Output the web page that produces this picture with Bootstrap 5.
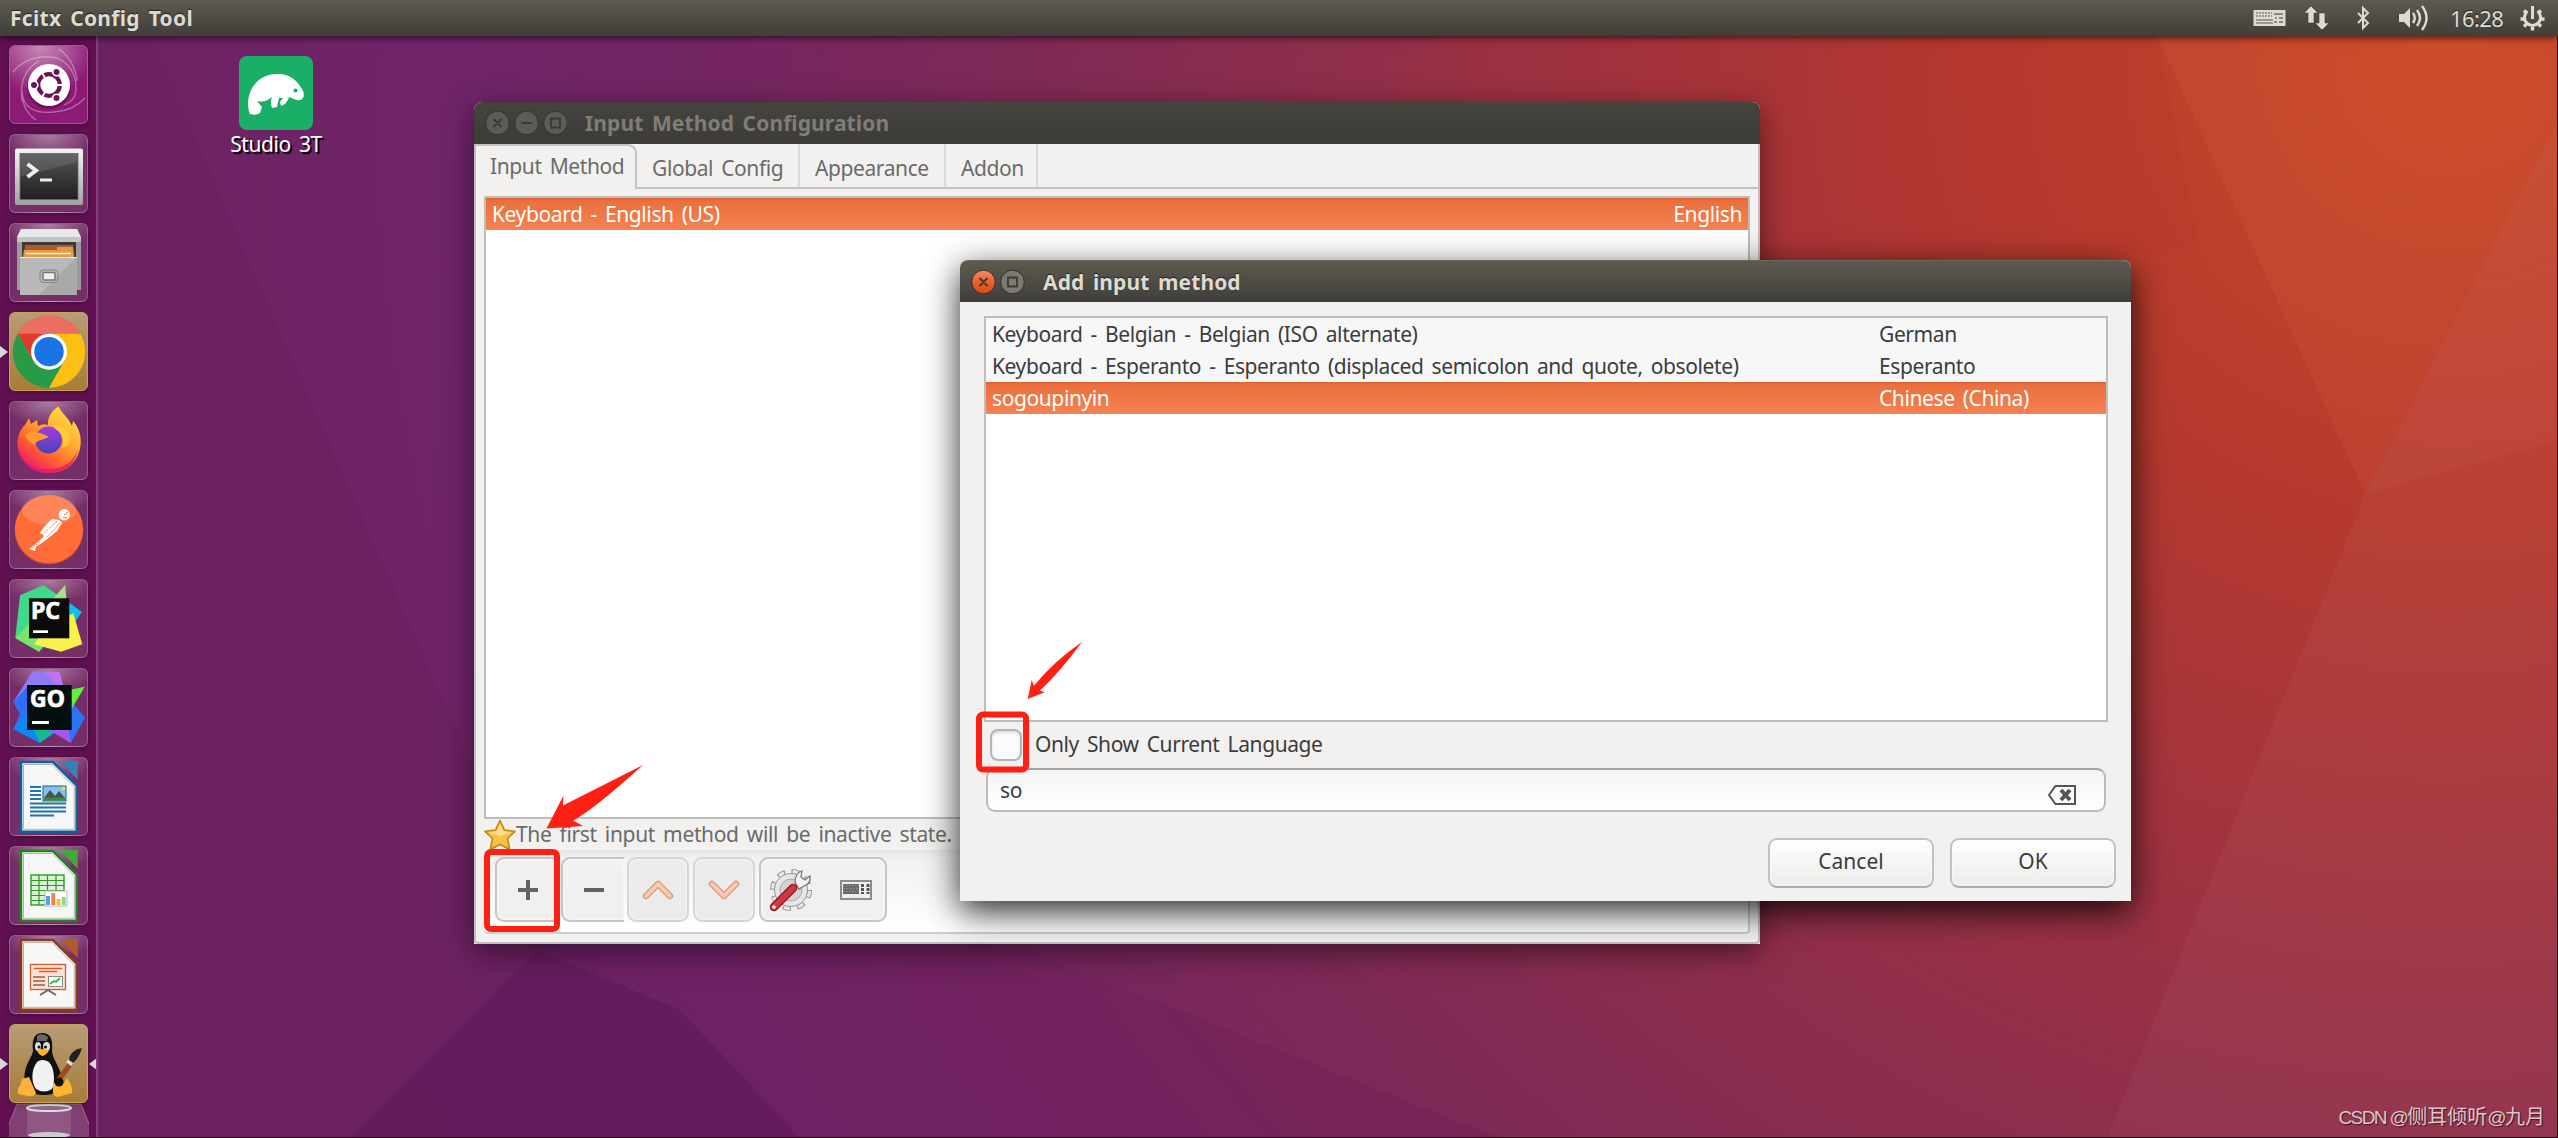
<!DOCTYPE html>
<html lang="en">
<head>
    <meta charset="UTF-8">
    <meta name="viewport" content="width=device-width, initial-scale=1.0">
    <title>Fcitx Config Tool</title>
    <link href="https://cdn.jsdelivr.net/npm/bootstrap@5.3.0/dist/css/bootstrap.min.css" rel="stylesheet">
    <style>
        body {
            width: 2558px;
            height: 1138px;
            overflow: hidden;
            background: #6d2363;
            font-family: "Noto Sans", "Open Sans", sans-serif;
            font-size: 21px;
            line-height: 32px;
            letter-spacing: -0.4px;
            word-spacing: 3px;
            color: #3c3c3c;
        }
        svg { display: block; flex: none; }
        .wallpaper { position: absolute; inset: 0; z-index: -1; }

        /* top panel */
        .top-panel {
            height: 36px;
            padding: 0 13px 0 10px;
            background: linear-gradient(#5d5a50, #3f3e39);
            color: #dfdbd2;
            text-shadow: 0 -1px 1px #222;
            box-shadow: 0 1px 8px rgba(0, 0, 0, .75);
            position: relative;
            z-index: 5;
        }
        .panel-title { font-weight: 700; letter-spacing: .3px; }
        .panel-clock { font-size: 22px; width: 55px; margin-left: 20px; margin-right: 15px; letter-spacing: -0.6px; }
        .panel-net { margin-left: 15px; margin-right: -3px; }

        /* launcher */
        .launcher {
            width: 98px;
            height: 1102px;
            padding-top: 9px;
            padding-left: 9px;
            background: #621052;
            border-right: 2px solid #84427b;
            overflow: hidden;
        }
        .tile {
            width: 79px;
            height: 79px;
            margin-bottom: 10px;
            flex: none;
            position: relative;
            border-radius: 6px;
            border: 1px solid rgba(255, 255, 255, .22);
            background: radial-gradient(ellipse 45px 24px at 50% 0, rgba(255, 255, 255, .38), rgba(255, 255, 255, 0)), rgba(255, 255, 255, .13);
            box-shadow: 0 1px 5px rgba(0, 0, 0, .35);
        }
        .tile svg { margin: -1px; width: 79px; height: 79px; }
        .tile text { font-family: "Noto Sans", sans-serif; font-weight: 700; font-size: 23px; letter-spacing: 0; fill: #fff; stroke: #fff; stroke-width: .7px; }
        .tile-dash { background: radial-gradient(ellipse 55px 50px at 40% 0, #c88ab9, #8d1a75); border-color: #b650a0; }
        .tile-active { background: linear-gradient(#b79c74, #a87d3a); border-color: #c9a259; }
        .pip { position: absolute; top: 33px; border: 6px solid transparent; }
        .pip-left { left: -10px; border-left: 8px solid #d8d8d8; }
        .pip-right { right: -10px; border-right: 8px solid #d8d8d8; }
        .trash { margin-top: -10px; }

        /* desktop shortcut */
        .shortcut { position: absolute; left: 226px; top: 56px; width: 100px; color: #fff; text-shadow: 2px 2px 1px #000; }
        .shortcut svg { margin-bottom: -2px; }

        /* windows */
        .win { position: absolute; border-radius: 8px 8px 0 0; background: #f2f1ef; }
        .win-config { left: 474px; top: 102px; width: 1286px; height: 842px; box-shadow: 0 8px 30px rgba(0, 0, 0, .5); }
        .win-dialog { left: 960px; top: 260px; width: 1171px; height: 641px; box-shadow: 0 10px 34px rgba(0, 0, 0, .85); }
        .win-title { height: 42px; padding-left: 11px; border-radius: 8px 8px 0 0; font-weight: 700; letter-spacing: .1px; }
        .win-title span { margin-left: 18px; }
        .win-config .win-title { background: linear-gradient(#45443f, #3c3b37); color: #807d76; }
        .win-dialog .win-title { background: linear-gradient(#5d5a50, #3f3e39); color: #dfdbd2; text-shadow: 0 -1px 1px #222; border-top: 1px solid #69675a; }

        .win-config .win-main { height: 800px; color: #6b6b6b; border: 2px solid #c0bfbd; border-top: 0; border-radius: 0 0 4px 4px; }
        .tab-row { height: 45px; }
        .tab-item { height: 43px; padding-top: 4px; padding-left: 15px; border-right: 2px solid #dddbd8; display: flex; align-items: center; }
        .tab-current { width: 161px; height: 45px; padding: 0 0 4px 14px; border: 2px solid #c6c4c2; border-bottom: 0; border-left: 0; border-radius: 0 9px 0 0; }
        .tab-rest { border-bottom: 2px solid #c6c4c2; flex: 1; height: 45px; }
        .tab-wide { width: 163px; }
        .tab-mid { width: 146px; }
        .tab-small { width: 92px; }

        .list-box { background: #fff; border: 2px solid #bfbdb9; }
        .config-list { height: 623px; margin: 7px 8px 0; }
        .list-line { height: 32px; padding: 0 6px; }
        .list-line.picked { background: linear-gradient(#e0612f, #eb703d 3px, #f68151); color: #fff; }

        .hint { height: 31px; margin-left: 8px; letter-spacing: -0.35px; }
        .hint span { padding-bottom: 2px; }
        .tool-area { height: 84px; margin: 0 8px; padding: 7px 0 0 11px; background: linear-gradient(#e6e5e3, #f2f1ef 10%, #fff); border-bottom: 2px solid #cfcdca; border-right: 2px solid #cfcdca; border-radius: 0 0 4px 4px; }
        .tool-btn {
            width: 62px;
            height: 65px;
            margin-right: 4px;
            border: 2px solid #c6c4c3;
            border-radius: 9px;
            background: linear-gradient(#f2f1ef, #f0efed);
            box-shadow: inset 0 0 3px #fff;
            display: flex;
            align-items: center;
            justify-content: center;
        }
        .tool-cut { border-right: 0; border-radius: 9px 0 0 9px; width: 63px; margin-right: 3px; }
        .tool-off { background: #ebebeb; border-color: #d6d5d4; }
        .tool-wide { width: 128px; justify-content: space-between; padding: 0 13px 0 8px; }

        /* dialog body */
        .dialog-list { height: 406px; margin: 14px 23px 0 24px; }
        .dialog-list .list-line:not(.picked) { background: #f7f7f7; }
        .col-lang { width: 221px; }
        .check-row { height: 46px; padding-left: 30px; }
        .check-row span { padding-bottom: 2px; }
        .check-box { width: 32px; height: 32px; border: 2px solid #b5b4b3; border-radius: 8px; background: #fcfcfc; box-shadow: inset 0 2px 3px #ddd; margin-right: 13px; }
        .entry { height: 44px; margin: 0 25px 0 26px; padding: 0 28px 0 12px; border: 2px solid #bdbcbb; border-top-color: #a3a2a1; border-radius: 9px; background: linear-gradient(#f4f4f4, #fff); }
        .entry svg { margin-top: 10px; }
        .dialog-btns { padding: 26px 15px 0 0; gap: 16px; }
        .dlg-btn { width: 166px; height: 50px; padding-bottom: 5px; border: 2px solid #c3c2c1; border-bottom-color: #adacab; border-radius: 9px; background: linear-gradient(#fff, #ecebe9); box-shadow: inset 0 0 3px #fff; display: flex; align-items: center; justify-content: center; letter-spacing: 0; }

        .marks { position: absolute; left: 0; top: 0; z-index: 10; }
        .credit { position: absolute; right: 13px; bottom: 4px; font: 20px/32px "Liberation Sans", "Noto Sans CJK SC", sans-serif; letter-spacing: 0; word-spacing: 0; color: #dcc8cc; text-shadow: 1px 1px 1px rgba(0, 0, 0, .6); }
        .credit span { font-size: 19px; letter-spacing: -1.6px; }
        .edge { position: absolute; inset: 0; border-right: 1px solid #111; border-bottom: 1px solid #111; }
    </style>
</head>
<body>
    <!-- Wallpaper -->
    <svg class="wallpaper" width="2558" height="1138" viewBox="0 0 2558 1138">
        <defs>
            <radialGradient id="wall" gradientUnits="userSpaceOnUse" cx="2450" cy="60" r="2300">
                <stop offset="0" stop-color="#ca4826"/>
                <stop offset=".2" stop-color="#b6392e"/>
                <stop offset=".33" stop-color="#a5343c"/>
                <stop offset=".46" stop-color="#922f49"/>
                <stop offset=".6" stop-color="#812a54"/>
                <stop offset=".75" stop-color="#742561"/>
                <stop offset=".87" stop-color="#70246a"/>
                <stop offset="1" stop-color="#6d2363"/>
            </radialGradient>
        </defs>
        <rect width="2558" height="1138" fill="url(#wall)"/>
        <polygon points="0,0 134,0 474,770 538,950 350,1138 0,1138" fill="#6c2262"/>
        <polygon points="538,950 350,1138 800,1138 680,1010" fill="#611a5b" opacity=".7"/>
        <polygon points="538,950 680,1010 800,1138 1500,1138 900,900 474,900" fill="#681b5c" opacity=".2"/>
        <polygon points="1440,36 1370,110 1700,280 2200,250 2157,36" fill="#b0322f" opacity=".1"/>
        <polygon points="2157,36 2365,494 2107,1138 2558,1138 2558,36" fill="#fff" opacity=".035"/>
        <polygon points="2365,494 2558,120 2558,36 2157,36" fill="#d8501f" opacity=".13"/>
        <polygon points="2365,494 2558,440 2558,120" fill="#fff" opacity=".03"/>
    </svg>

    <!-- Top panel -->
    <nav class="top-panel d-flex align-items-center">
        <span class="panel-title">Fcitx Config Tool</span>
        <div class="d-flex align-items-center ms-auto">
            <svg width="33" height="18" viewBox="0 0 33 18">
                <rect x=".5" y="1" width="32" height="16" fill="#dfdbd2"/>
                <path d="M3 4H19M3 7H19" stroke="#99978f" stroke-width="2" stroke-dasharray="2 1"/>
                <path d="M3 11H20M3 14H20" stroke="#99978f" stroke-width="2"/>
                <path d="M21 5H30M22 9H24M26 9H30M21 13H24M26 13H30" stroke="#8a8880" stroke-width="2"/>
            </svg>
            <svg class="panel-net" width="32" height="26" viewBox="0 0 32 26">
                <path d="M10 1L17 8H13V18H7V8H3zM21 25L28 18H24V8H18V18H14z" fill="#dfdbd2" stroke="#3a3935" stroke-width=".6"/>
            </svg>
            <svg class="ms-4" width="18" height="26" viewBox="0 0 18 26">
                <path d="M4 8L14 18L9 23V3L14 8L4 18" fill="none" stroke="#dfdbd2" stroke-width="2"/>
            </svg>
            <svg class="ms-4" width="34" height="28" viewBox="0 0 34 28">
                <path d="M3 10H8L14 4V24L8 18H3z" fill="#dfdbd2"/>
                <path d="M17 9Q20.500 14 17 19M21 6Q27 14 21 22M26 2Q35 14 26 26" fill="none" stroke="#dfdbd2" stroke-width="2.400"/>
            </svg>
            <span class="panel-clock">16:28</span>
            <svg width="25" height="26" viewBox="-12.5 -13 25 26">
                <path d="M-5 -6.800A8 8 0 1 0 5 -6.800" fill="none" stroke="#dfdbd2" stroke-width="3"/>
                <path d="M0 -12V1" stroke="#dfdbd2" stroke-width="3"/>
                <path d="M-8 1H-12M8 1H12M-6 6L-8.500 8.500M6 6L8.500 8.500M0 9V12.500M-6 -5L-8.500 -7.500M6 -5L8.500 -7.500" stroke="#dfdbd2" stroke-width="3.400"/>
            </svg>
        </div>
    </nav>

    <!-- Launcher -->
    <div class="launcher d-flex flex-column">
        <div class="tile tile-dash">
            <svg viewBox="0 0 79 79">
                <path d="M4 27Q20 8 48 13Q68 22 67 46Q66 56 55 60M13 56Q9 28 30 16M13 46Q14 70 45 67Q64 66 76 53M50 4Q66 16 68 36M13 50Q14 66 27 75" fill="none" stroke="#fff" stroke-opacity=".35" stroke-width="1.3"/>
                <circle cx="40" cy="42" r="22" fill="#000" opacity=".25"/>
                <circle cx="40" cy="40" r="21" fill="#fff"/>
                <circle cx="40" cy="40" r="10.800" fill="none" stroke="#6c1458" stroke-width="4.200"/>
                <path d="M40 40L32 26M40 40L32 54M40 40H56" stroke="#fff" stroke-width="1.800"/>
                <circle cx="40" cy="40" r="8.200" fill="#fff"/>
                <g fill="#6c1458" stroke="#fff" stroke-width="1.600"><circle cx="25" cy="40" r="3.800"/><circle cx="47.500" cy="27" r="3.800"/><circle cx="47.500" cy="53" r="3.800"/></g>
            </svg>
        </div>
        <div class="tile">
            <svg viewBox="0 0 79 79">
                <defs>
                    <linearGradient id="frame" x2="0" y2="1"><stop stop-color="#f4f4f4"/><stop offset="1" stop-color="#a2a2a2"/></linearGradient>
                    <linearGradient id="screen" x2="0" y2="1"><stop stop-color="#555"/><stop offset="1" stop-color="#1f1f1f"/></linearGradient>
                </defs>
                <rect x="6" y="14.500" width="68" height="56.500" rx="2" fill="url(#frame)"/>
                <rect x="11" y="19.500" width="58" height="46" fill="url(#screen)" stroke="#666" stroke-width=".8"/>
                <path d="M11.500 20H68.500V28L11.500 43z" fill="#fff" opacity=".1"/>
                <path d="M18.500 30L27 36.500L18.500 43" fill="none" stroke="#eee" stroke-width="4"/>
                <path d="M31 46H43" stroke="#eee" stroke-width="3"/>
            </svg>
        </div>
        <div class="tile">
            <svg viewBox="0 0 79 79">
                <path d="M12 6H68L72 15V67H8V15z" fill="#9b9b9b"/>
                <path d="M12 6H68L72 14H8z" fill="#e8e8e8"/>
                <rect x="8" y="14" width="64" height="5" fill="#c4c4c4"/>
                <rect x="13" y="19" width="54" height="16" fill="#3b3b3b"/>
                <path d="M16 22H64L65 34H15z" fill="#b3582a"/>
                <path d="M15 27H48V24H64L65 34H14z" fill="#e79a45"/>
                <path d="M17 30.500H62" stroke="#fff3df" stroke-width="1.500"/>
                <rect x="11" y="34" width="57" height="38" fill="#a9a9a9"/>
                <path d="M11 34H68L30 72H11z" fill="#c4c4c4" opacity=".6"/>
                <path d="M11 34.500H68" stroke="#eee"/>
                <rect x="31" y="47" width="18" height="12.500" rx="3" fill="none" stroke="#858585"/>
                <rect x="34" y="49.500" width="12" height="7.500" rx="1" fill="#eee" stroke="#777" stroke-width="1.500"/>
            </svg>
        </div>
        <div class="tile tile-active">
            <i class="pip pip-left"></i>
            <svg viewBox="0 0 79 79">
                <path d="M8.700 21.700A36 36 0 0 1 71.300 21.700H40L24.400 48.700z" fill="#e0392c"/>
                <path d="M8.700 21.700A36 36 0 0 1 71.300 21.700z" fill="#f28a80" opacity=".65"/>
                <path d="M8.700 21.700L24.400 48.700L55.600 48.700L40 75.700A36 36 0 0 1 8.700 21.700z" fill="#289b47"/>
                <path d="M71.300 21.700A36 36 0 0 1 40 75.700L55.600 48.700L40 21.700z" fill="#fcc015"/>
                <circle cx="40" cy="39.700" r="18" fill="#fff"/>
                <circle cx="40" cy="39.700" r="14.700" fill="#1b73e8"/>
            </svg>
        </div>
        <div class="tile">
            <svg viewBox="0 0 79 79">
                <defs>
                    <linearGradient id="fox" x1=".9" y1="0" x2=".2" y2="1"><stop stop-color="#ffe94a"/><stop offset=".4" stop-color="#ffae2e"/><stop offset=".72" stop-color="#ff5a33"/><stop offset="1" stop-color="#e8116f"/></linearGradient>
                    <linearGradient id="globe" x2="0" y2="1"><stop stop-color="#a43be0"/><stop offset="1" stop-color="#4a42b8"/></linearGradient>
                </defs>
                <path d="M49.500 5.500C54 14 60 17 63 25L64 20C75 32 74 52 63 63C52 75 28 75 17 63C6 52 6 33 16 24L20 17L22 23L28 19L29 25Q34 22 39 24C38 17 43 9 49.500 5.500z" fill="url(#fox)"/>
                <circle cx="39.500" cy="39" r="13.500" fill="url(#globe)"/>
                <path d="M16 34Q22 29 31 32Q37 34 40 36Q35 38 32 39Q27 40 26 44Q19 41 16 34z" fill="#ff9b2e"/>
                <path d="M46 28Q57 34 53 47Q64 44 59 31Q54 23 45 24z" fill="#ffc93c"/>
                <path d="M10 47Q14 68 40 68Q62 68 69 48Q64 72 40 72Q14 71 10 47z" fill="#e5127a" opacity=".75"/>
            </svg>
        </div>
        <div class="tile">
            <svg viewBox="0 0 79 79">
                <circle cx="40" cy="40" r="34.300" fill="#d4521f"/>
                <circle cx="40" cy="39" r="34" fill="#ff6c37"/>
                <ellipse cx="40" cy="20" rx="27" ry="15" fill="#fff" opacity=".17"/>
                <circle cx="55.300" cy="24.700" r="5.600" fill="#fff"/>
                <path d="M55 25L59 22M54 27L58 28" stroke="#ff6c37" stroke-width="1"/>
                <path d="M43 29L50 30L53 33L48 41L37 50L27 57L26 61L20 59L29 52L35 46L31 43L35 37z" fill="#fff"/>
                <path d="M48 31L33 45M51 33L38 47M31 52L23 58" stroke="#ff6c37" stroke-width="1" stroke-dasharray="2 1"/>
            </svg>
        </div>
        <div class="tile">
            <svg viewBox="0 0 79 79">
                <path d="M34.300 6.300L11 16.300L6.300 59L30 72.700L62 40L52 18z" fill="#3fd98a"/>
                <path d="M20 45L6.300 59L30 72.700L45 50z" fill="#7be36b"/>
                <path d="M56.300 6L40 24L58 28z" fill="#a4e47c"/>
                <path d="M58 22L72.700 33L64 46L56 44z" fill="#08c3f0"/>
                <path d="M25 65.300L52 72.700L73.300 65.300L64.300 34.300L40 45z" fill="#f8f24a"/>
                <rect x="20" y="19.300" width="40.300" height="40" fill="#0b0b0b"/>
                <text x="22" y="40">PC</text>
                <rect x="24" y="51.300" width="15" height="2.700" fill="#fff"/>
            </svg>
        </div>
        <div class="tile">
            <svg viewBox="0 0 79 79">
                <path d="M23.700 3.300L50.300 4L56 24L18 40L4.300 34z" fill="#8f7cf5"/>
                <path d="M36 4L50.300 4L56 24z" fill="#c173f3"/>
                <path d="M4.300 34L20 17L26 60L4.300 61.300L11 46z" fill="#2f6dfa"/>
                <path d="M4.300 61.300L18 42L50 62L31 75z" fill="#0e87f4"/>
                <path d="M31 75L24 60L50 60z" fill="#14b999"/>
                <path d="M40 62L61.700 75L66 56z" fill="#a457f2"/>
                <path d="M60 30L76 49.700L61.700 75L58 50z" fill="#2d73f8"/>
                <path d="M75.700 18.700L50 24L62 42z" fill="#5ff03f"/>
                <rect x="18" y="17" width="44.700" height="45" fill="#03100f"/>
                <text x="21" y="39">GO</text>
                <rect x="23" y="53" width="17" height="3" fill="#fff"/>
            </svg>
        </div>
        <div class="tile">
            <svg viewBox="0 0 79 79">
                <path d="M12 5H44L67.700 28.700V74.700H12z" fill="#f7f7f7" stroke="#10629b" stroke-width="2.600"/>
                <path d="M14.500 7.500H43L65.300 30V72.300H14.500z" fill="none" stroke="#b5b5b5" stroke-width="1"/>
                <path d="M50.300 4H68.700V22.700z" fill="#3483b4"/>
                <path d="M21 30H32M21 34H32M21 38H32M21 42H32M21 46.500H57M21 50.500H57M21 54.500H57M21 58.500H45" stroke="#2273ad" stroke-width="2"/>
                <rect x="34" y="29" width="23" height="15" fill="#83c3ea" stroke="#1b5f93"/>
                <path d="M35 41L41 33L46 39L50 34L56 41z" fill="#4a5052"/>
                <path d="M35 40.500H56V43.500H35z" fill="#3c8c2f"/>
                <circle cx="54.500" cy="31.500" r="2" fill="#ffd42a"/>
            </svg>
        </div>
        <div class="tile">
            <svg viewBox="0 0 79 79">
                <path d="M12 5H44L67.700 28.700V74.700H12z" fill="#f7f7f7" stroke="#1f861b" stroke-width="2.600"/>
                <path d="M14.500 7.500H43L65.300 30V72.300H14.500z" fill="none" stroke="#b5b5b5" stroke-width="1"/>
                <path d="M50.300 4H68.700V22.700z" fill="#46a83a"/>
                <rect x="22" y="29" width="33" height="30" fill="#dcf3d6" stroke="#2f972b" stroke-width="1.400"/>
                <path d="M22 34.500H55M22 39.500H55M22 44.500H55M22 49.500H55M22 54.500H55M30 29V59M38.500 29V59M47 29V59" stroke="#2f972b" stroke-width="1.200"/>
                <rect x="36" y="45" width="22" height="15" fill="#fff" stroke="#bbb"/>
                <path d="M39 59V50" stroke="#5a9fdf" stroke-width="4"/><path d="M44.300 59V47" stroke="#e5835f" stroke-width="4"/><path d="M49.500 59V53" stroke="#f0c040" stroke-width="4"/><path d="M54.700 59V51" stroke="#83dd83" stroke-width="4"/>
            </svg>
        </div>
        <div class="tile">
            <svg viewBox="0 0 79 79">
                <path d="M12 5H44L67.700 28.700V74.700H12z" fill="#f7f7f7" stroke="#8b3d12" stroke-width="2.600"/>
                <path d="M14.500 7.500H43L65.300 30V72.300H14.500z" fill="none" stroke="#b5b5b5" stroke-width="1"/>
                <path d="M50.300 4H68.700V22.700z" fill="#b15c2b"/>
                <rect x="21.500" y="29.500" width="35" height="25" fill="#fbe3d5" stroke="#c2613a" stroke-width="1.300"/>
                <path d="M25 33.500H53M30 36.500H48" stroke="#e0572a" stroke-width="1.500"/>
                <path d="M24 42H36M24 46H36M24 50H36" stroke="#a05a3c" stroke-width="1.500"/>
                <rect x="39.500" y="41.500" width="14" height="10" fill="#fff" stroke="#888"/>
                <path d="M41 49L45 46L47 47L51 43" fill="none" stroke="#3eb13e" stroke-width="1.800"/>
                <path d="M39 55L31 60M39 55L47 60" stroke="#666" stroke-width="1.800"/>
            </svg>
        </div>
        <div class="tile tile-active">
            <i class="pip pip-left"></i>
            <i class="pip pip-right"></i>
            <svg viewBox="0 0 79 79">
                <path d="M33 9C24 9 23 18 24 26C24 34 13 41 16 60Q20 72 34 71Q50 72 53 58C53 44 43 36 43 26C44 16 42 9 33 9z" fill="#111"/>
                <path d="M28 12Q33 8 39 13L38 17H28z" fill="#666"/>
                <path d="M28 38Q33 34 40 38C46 44 46 60 43 65Q35 70 27 65C22 58 22 46 28 38z" fill="#f1f1f1"/>
                <ellipse cx="29" cy="22.500" rx="3" ry="4.500" fill="#ddd"/><ellipse cx="37.500" cy="22.500" rx="3.500" ry="4.500" fill="#ddd"/>
                <circle cx="30" cy="23" r="1.500" fill="#111"/><circle cx="36.500" cy="23" r="1.500" fill="#111"/>
                <path d="M28 27Q33 23 40 27Q36 32 33 32Q30 31 28 27z" fill="#f9b51c"/>
                <path d="M13 55L20 53L27 69Q25 73 19 72L9 70Q8 64 11 62z" fill="#ffb13d"/>
                <path d="M44 58L53 62L58 54Q64 62 63 69L49 73Q43 72 44 66z" fill="#ffb62c"/>
                <path d="M59 39L63 42L50 60L46 56z" fill="#9b4d1d"/>
                <path d="M57 38L61 34L65 38L62 42z" fill="#ddd"/>
                <path d="M60 36Q61 26 73 24Q70 34 64 39z" fill="#222"/>
                <circle cx="50" cy="58" r="4.500" fill="#111"/>
            </svg>
        </div>
        <svg class="trash" width="80" height="36" viewBox="0 0 80 36">
            <path d="M8 1H72L86 36H-6z" fill="#fff" fill-opacity=".2" stroke="#fff" stroke-opacity=".3"/>
            <path d="M18 5H62V33H18z" fill="#fff" opacity=".12"/>
            <ellipse cx="40" cy="5" rx="22" ry="3" fill="#8b6c88" stroke="#ddd" stroke-width="2"/>
            <ellipse cx="40" cy="32" rx="21" ry="3" fill="#ccc"/>
        </svg>
    </div>

    <!-- Desktop shortcut -->
    <div class="shortcut d-flex flex-column align-items-center">
        <svg width="74" height="74" viewBox="0 0 74 74">
            <rect width="74" height="74" rx="8" fill="#1bae66"/>
            <path d="M9 47C10 28 24 17 39 18C52 18 58 25 63 33Q66 38 64 42Q61 46 55 43L50 41Q48 48 42 50L41 46L44 42L40 42L38 51L33 52Q31 46 33 41Q26 47 18 45L23 51L21 57Q17 60 11 58Q9 54 9 47z" fill="#fff"/>
            <circle cx="56.500" cy="34.500" r="2" fill="#1bae66"/>
        </svg>
        <span class="text-nowrap">Studio 3T</span>
    </div>

    <!-- Input Method Configuration -->
    <div class="win win-config">
        <div class="win-title d-flex align-items-center">
            <svg width="82" height="26" viewBox="0 0 82 26">
                <g fill="#5c5b54" stroke="#33322e"><circle cx="12.500" cy="13" r="11.800"/><circle cx="41.500" cy="13" r="11.800"/><circle cx="70.500" cy="13" r="11.800"/></g>
                <path d="M8.500 9L16.500 17M16.500 9L8.500 17M36.500 13H46.500M66 8.500H75V17.500H66z" fill="none" stroke="#3a3935" stroke-width="1.800"/>
            </svg>
            <span>Input Method Configuration</span>
        </div>
        <div class="win-main">
            <div class="tab-row d-flex">
                <div class="tab-item tab-current">Input Method</div>
                <div class="tab-rest d-flex">
                    <div class="tab-item tab-wide">Global Config</div>
                    <div class="tab-item tab-mid">Appearance</div>
                    <div class="tab-item tab-small">Addon</div>
                </div>
            </div>
            <div class="list-box config-list">
                <div class="list-line picked d-flex justify-content-between">
                    <span>Keyboard - English (US)</span><span>English</span>
                </div>
            </div>
            <div class="hint d-flex align-items-center">
                <svg width="32" height="32" viewBox="0 0 32 32">
                    <path d="M16 1.500L20.500 11L31 12.300L23.500 19.500L25.700 30.500L16 25.500L6.300 30.500L8.500 19.500L1 12.300L11.500 11z" fill="#fbbf4a" stroke="#b98a14" stroke-width="1.600" stroke-linejoin="round"/>
                    <path d="M16 5L19.500 12.500L27 13.500L16 17L5 13.500L12.500 12.500z" fill="#ffe3a0" opacity=".8"/>
                </svg>
                <span>The first input method will be inactive state.</span>
            </div>
            <div class="tool-area d-flex">
                <div class="tool-btn tool-cut"><svg width="22" height="22" viewBox="0 0 22 22"><path d="M11 1V21M1 11H21" stroke="#636363" stroke-width="4"/></svg></div>
                <div class="tool-btn tool-cut"><svg width="22" height="22" viewBox="0 0 22 22"><path d="M1 11H21" stroke="#636363" stroke-width="4"/></svg></div>
                <div class="tool-btn tool-off"><svg width="32" height="22" viewBox="0 0 32 22"><path d="M4 17L16 5L28 17" fill="none" stroke="#e39a7e" stroke-width="6.500" stroke-linecap="round" stroke-linejoin="round"/><path d="M4 17L16 5L28 17" fill="none" stroke="#f6cfb2" stroke-width="3.500" stroke-linecap="round" stroke-linejoin="round"/></svg></div>
                <div class="tool-btn tool-off"><svg width="32" height="22" viewBox="0 0 32 22"><path d="M4 5L16 17L28 5" fill="none" stroke="#e39a7e" stroke-width="6.500" stroke-linecap="round" stroke-linejoin="round"/><path d="M4 5L16 17L28 5" fill="none" stroke="#f6cfb2" stroke-width="3.500" stroke-linecap="round" stroke-linejoin="round"/></svg></div>
                <div class="tool-btn tool-wide">
                    <svg width="44" height="44" viewBox="0 0 44 44">
                        <circle cx="22" cy="22" r="18.500" fill="none" stroke="#8f8f8f" stroke-width="5" stroke-dasharray="8 6.530"/>
                        <circle cx="22" cy="22" r="18.500" fill="none" stroke="#e6e6e6" stroke-width="3.400" stroke-dasharray="6 8.530" stroke-dashoffset="-1"/>
                        <circle cx="22" cy="22" r="16.500" fill="#e6e6e6" stroke="#999"/>
                        <circle cx="22" cy="22" r="11" fill="#d3d3d3" stroke="#aaa"/>
                        <path d="M26 14Q26 5 33 3L32 9L36 12L41 8Q42 16 35 18L30 21z" fill="#f3f3f3" stroke="#777" stroke-width="1.300"/>
                        <path d="M5 39L24 20" stroke="#8e1620" stroke-width="8.500" stroke-linecap="round"/>
                        <path d="M5 39L24 20" stroke="#d23a40" stroke-width="6" stroke-linecap="round"/>
                        <circle cx="5" cy="39" r="1.800" fill="#fff"/>
                    </svg>
                    <svg width="32" height="20" viewBox="0 0 32 20">
                        <rect x="1" y="1" width="30" height="18" fill="#eee" stroke="#8c8c8c" stroke-width="2"/>
                        <rect x="3" y="4" width="16" height="10" fill="#666"/>
                        <path d="M3 5.500H19M4 8.500H19M3 11.500H19" stroke="#999" stroke-width="1.500" stroke-dasharray="1.500 1.500"/>
                        <path d="M22.500 4V14M28 4V14" stroke="#555" stroke-width="3" stroke-dasharray="3 1"/>
                    </svg>
                </div>
            </div>
        </div>
    </div>

    <!-- Add input method -->
    <div class="win win-dialog">
        <div class="win-title d-flex align-items-center">
            <svg width="54" height="26" viewBox="0 0 54 26">
                <defs><linearGradient id="shut" x2="0" y2="1"><stop stop-color="#f58a66"/><stop offset=".5" stop-color="#ec5f2f"/><stop offset="1" stop-color="#dd4814"/></linearGradient></defs>
                <circle cx="12.500" cy="13" r="11.800" fill="url(#shut)" stroke="#33322e"/>
                <circle cx="41.500" cy="13" r="11.800" fill="#7b7971" stroke="#33322e"/>
                <path d="M8.500 9L16.500 17M16.500 9L8.500 17M37 8.500H46V17.500H37z" fill="none" stroke="#3f3b36" stroke-width="1.900"/>
            </svg>
            <span>Add input method</span>
        </div>
        <div class="list-box dialog-list">
            <div class="list-line d-flex"><span class="me-auto">Keyboard - Belgian - Belgian (ISO alternate)</span><div class="col-lang">German</div></div>
            <div class="list-line d-flex"><span class="me-auto">Keyboard - Esperanto - Esperanto (displaced semicolon and quote, obsolete)</span><div class="col-lang">Esperanto</div></div>
            <div class="list-line picked d-flex"><span class="me-auto">sogoupinyin</span><div class="col-lang">Chinese (China)</div></div>
        </div>
        <div class="check-row d-flex align-items-center">
            <div class="check-box"></div>
            <span>Only Show Current Language</span>
        </div>
        <div class="entry d-flex align-items-center justify-content-between">
            <span>so</span>
            <svg width="28" height="20" viewBox="0 0 28 20">
                <path d="M7.500 1H27V19H7.500L1 10z" fill="none" stroke="#555" stroke-width="2"/>
                <path d="M13 5L22 15M22 5L13 15" stroke="#555" stroke-width="4"/>
            </svg>
        </div>
        <div class="dialog-btns d-flex justify-content-end">
            <div class="dlg-btn">Cancel</div>
            <div class="dlg-btn">OK</div>
        </div>
    </div>

    <!-- Red annotations -->
    <svg class="marks" width="2558" height="1138" viewBox="0 0 2558 1138">
        <g fill="none" stroke="#ff2013">
            <rect x="487" y="852" width="70" height="77" rx="4" stroke-width="6"/>
            <rect x="979" y="714.500" width="47" height="55" rx="4" stroke-width="6"/>
        </g>
        <path d="M643 765L563 805.500L563.500 795.500L546.500 828.500L583 826L573 820.500Q592 811 643 765z" fill="#ff2013"/>
        <path d="M1082 642Q1054 661 1034 685.700L1031.700 680L1027.700 699L1044.700 692.300L1040 690.500Q1060 672 1082 642z" fill="#ff2013"/>
    </svg>
    <div class="credit"><span>CSDN @</span>侧耳倾听<span>@</span>九月</div>
    <div class="edge"></div>

    <script src="https://cdn.jsdelivr.net/npm/bootstrap@5.3.0/dist/js/bootstrap.bundle.min.js"></script>
</body>
</html>
